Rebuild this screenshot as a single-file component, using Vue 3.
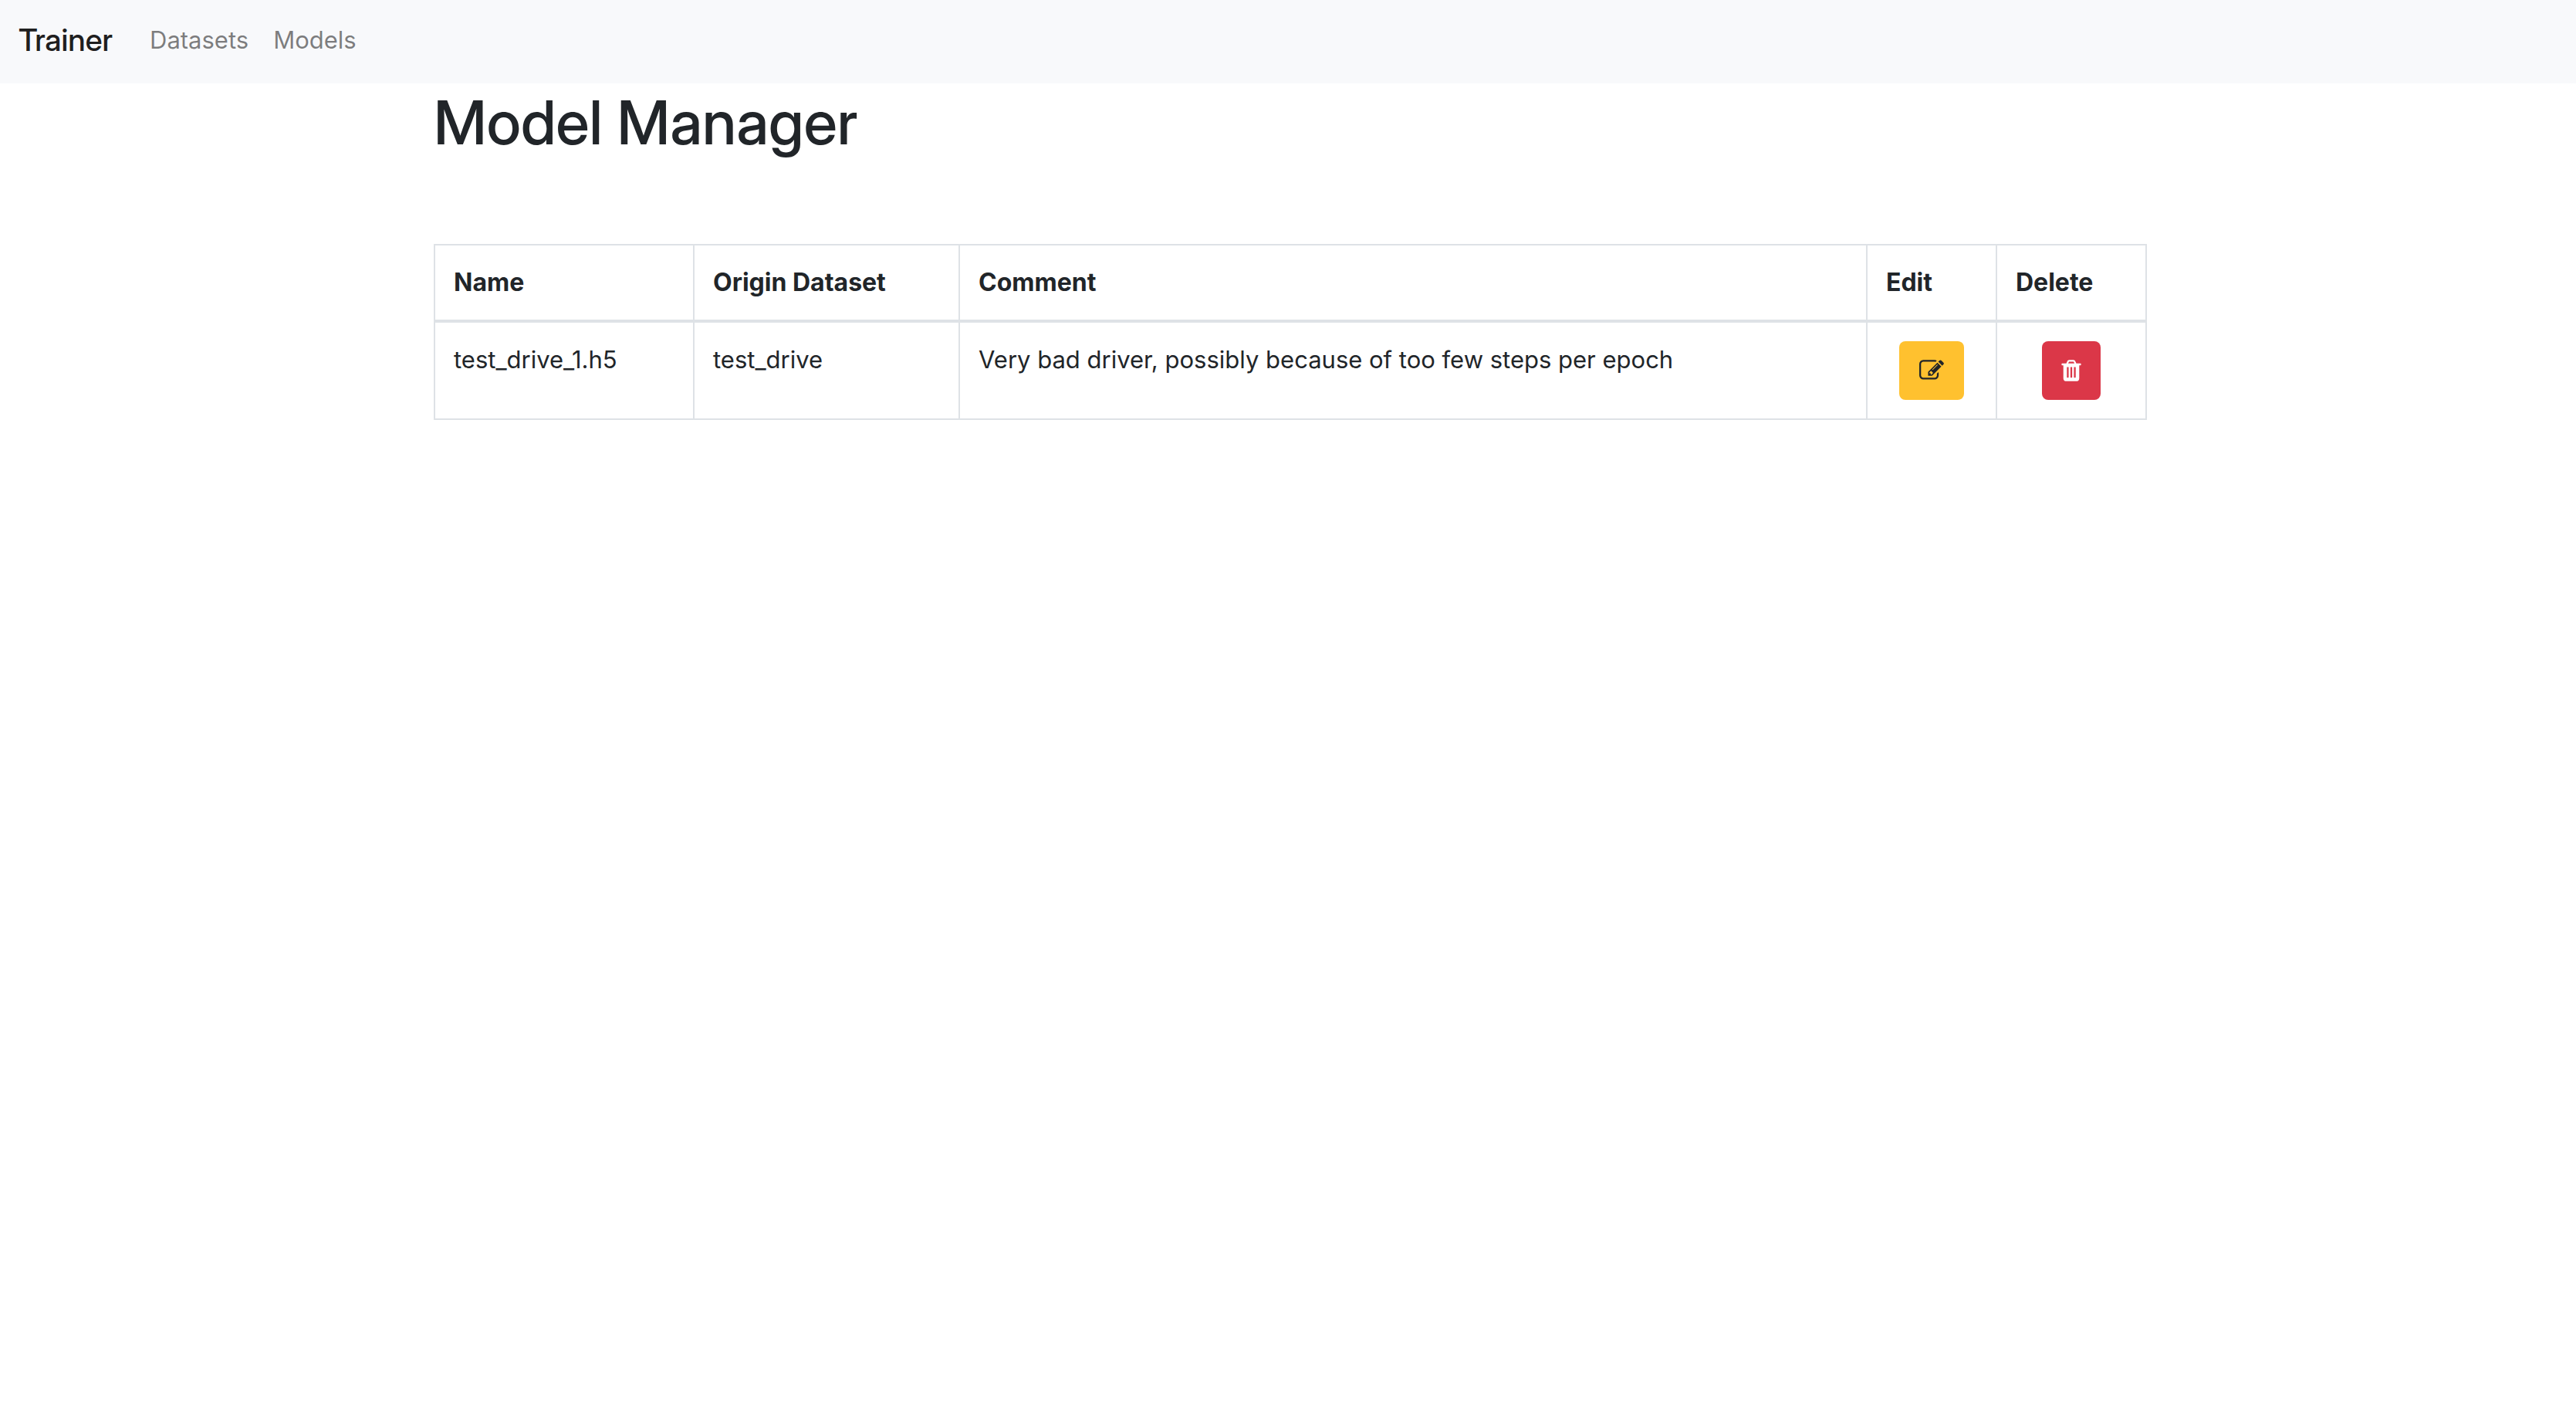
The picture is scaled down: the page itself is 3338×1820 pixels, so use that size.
<script setup>
const links = ['Datasets', 'Models']
const models = [
  {
    name: 'test_drive_1.h5',
    origin: 'test_drive',
    comment: 'Very bad driver, possibly because of too few steps per epoch',
  },
]
</script>

<template>
  <nav class="navbar">
    <a class="brand" href="#">Trainer</a>
    <ul class="nav-list">
      <li v-for="link in links" :key="link">
        <a class="nav-link" href="#">{{ link }}</a>
      </li>
    </ul>
  </nav>
  <main class="container">
    <h1>Model Manager</h1>
    <table class="models">
      <colgroup>
        <col class="col-name" />
        <col class="col-origin" />
        <col />
        <col class="col-edit" />
        <col class="col-delete" />
      </colgroup>
      <thead>
        <tr>
          <th scope="col">Name</th>
          <th scope="col">Origin Dataset</th>
          <th scope="col">Comment</th>
          <th scope="col">Edit</th>
          <th scope="col">Delete</th>
        </tr>
      </thead>
      <tbody>
        <tr v-for="model in models" :key="model.name">
          <td>{{ model.name }}</td>
          <td>{{ model.origin }}</td>
          <td>{{ model.comment }}</td>
          <td>
            <button class="btn btn-edit" type="button" aria-label="Edit">
              <svg class="icon" viewBox="0 0 1792 1792" aria-hidden="true">
                <path d="M888 1184l116-116-152-152-116 116v56h96v96h56zm440-720q-16-16-33 1l-350 350q-17 17-1 33t33-1l350-350q17-17 1-33zm80 594v190q0 119-84.5 203.5t-203.5 84.5h-832q-119 0-203.5-84.5t-84.5-203.5v-832q0-119 84.5-203.5t203.5-84.5h832q63 0 117 25 15 7 18 23 3 17-9 29l-49 49q-14 14-32 8-23-6-45-6h-832q-66 0-113 47t-47 113v832q0 66 47 113t113 47h832q66 0 113-47t47-113v-126q0-13 9-22l64-64q15-15 35-7t20 29zm-96-738l288 288-672 672h-288v-288zm444 132l-92 92-288-288 92-92q28-28 68-28t68 28l152 152q28 28 28 68t-28 68z" />
              </svg>
            </button>
          </td>
          <td>
            <button class="btn btn-delete" type="button" aria-label="Delete">
              <svg class="icon" viewBox="0 0 1792 1792" aria-hidden="true">
                <path d="M704 1376v-704q0-14-9-23t-23-9h-64q-14 0-23 9t-9 23v704q0 14 9 23t23 9h64q14 0 23-9t9-23zm256 0v-704q0-14-9-23t-23-9h-64q-14 0-23 9t-9 23v704q0 14 9 23t23 9h64q14 0 23-9t9-23zm256 0v-704q0-14-9-23t-23-9h-64q-14 0-23 9t-9 23v704q0 14 9 23t23 9h64q14 0 23-9t9-23zm-544-992h448l-48-117q-7-9-17-11h-317q-10 2-17 11zm928 32v64q0 14-9 23t-23 9h-96v948q0 83-47 143.5t-113 60.5h-832q-66 0-113-58.5t-47-141.5v-952h-96q-14 0-23-9t-9-23v-64q0-14 9-23t23-9h309l70-167q15-37 54-63t79-26h320q40 0 79 26t54 63l70 167h309q14 0 23 9t9 23z" />
              </svg>
            </button>
          </td>
        </tr>
      </tbody>
    </table>
  </main>
</template>

<style>
body {
  margin: 0;
  background: #fff;
  color: #212529;
  font-family: Inter, "Liberation Sans", sans-serif;
  font-size: 31px;
  line-height: 48px;
}
</style>

<style scoped>
.navbar {
  display: flex;
  align-items: center;
  gap: 48px;
  padding: 12px 24px 16px;
  background: #f8f9fb;
}

.brand {
  color: rgba(0, 0, 0, 0.9);
  font-family: "Inter Display", Inter, "Liberation Sans", sans-serif;
  font-size: 40px;
  font-weight: 500;
  line-height: 60px;
  text-decoration: none;
}

.nav-list {
  display: flex;
  gap: 32px;
  margin: 0;
  padding: 0;
  list-style: none;
}

.nav-link {
  display: block;
  padding: 16px 0;
  color: rgba(0, 0, 0, 0.5);
  text-decoration: none;
}

.container {
  box-sizing: border-box;
  max-width: 2226px;
  margin: 0 auto;
  padding-left: 6px;
}

h1 {
  margin: 0 0 108px;
  font-family: "Inter Display", Inter, "Liberation Sans", sans-serif;
  font-size: 79px;
  font-weight: 500;
  line-height: 100px;
}

.models {
  width: 100%;
  border-collapse: collapse;
  table-layout: fixed;
}

.col-name {
  width: 336px;
}

.col-origin {
  width: 344px;
}

.col-edit {
  width: 168px;
}

.col-delete {
  width: 194px;
}

th,
td {
  padding: 24px;
  border: 2px solid #dee2e6;
  text-align: left;
  vertical-align: top;
}

th {
  border-bottom-width: 4px;
  font-size: 32px;
  font-weight: 700;
}

.btn {
  display: flex;
  align-items: center;
  justify-content: center;
  height: 76px;
  margin: 0 auto;
  padding: 0;
  border: 0;
  border-radius: 8px;
  cursor: pointer;
}

.btn-edit {
  width: 84px;
  background: #ffc12f;
  color: #212529;
}

.btn-delete {
  width: 76px;
  background: #db3748;
  color: #fff;
}

.icon {
  display: block;
  width: 32px;
  height: 32px;
  fill: currentColor;
}
</style>
